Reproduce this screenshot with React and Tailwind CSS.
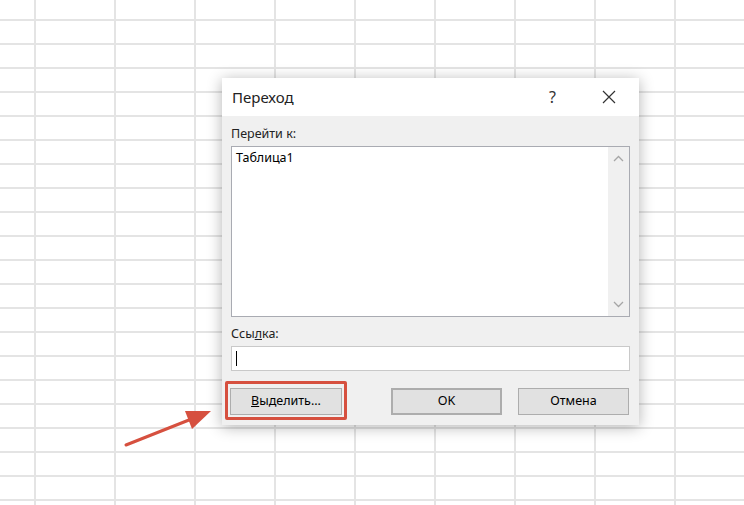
import React from 'react';

const font = { fontFamily: '"Noto Sans", "Open Sans", sans-serif' };

function Chevron({ down }) {
  return (
    <svg width="11" height="7" viewBox="0 0 11 7" className="text-[#a6a6a6]">
      <polyline
        points={down ? '1,1 5.5,5.5 10,1' : '1,6 5.5,1.5 10,6'}
        fill="none"
        stroke="currentColor"
        strokeWidth="1.3"
      />
    </svg>
  );
}

function Btn({ children, className = '' }) {
  return (
    <button
      className={`h-[27px] w-[111px] bg-[#e1e1e1] border border-[#adadad] text-[12.5px] text-black flex items-center justify-center ${className}`}
    >
      {children}
    </button>
  );
}

export default function App() {
  return (
    <div
      className="relative w-[744px] h-[505px] overflow-hidden bg-white bg-[linear-gradient(to_right,#e4e4e4_2px,transparent_2px),linear-gradient(to_bottom,#e4e4e4_2px,transparent_2px)] bg-[size:80px_24px] bg-[position:34px_19px]"
      style={font}
    >
      {/* dialog */}
      <div className="absolute left-[222px] top-[78px] w-[417px] h-[347px] flex flex-col bg-[#f0f0f0] shadow-[0_2px_14px_rgba(0,0,0,0.3)]">
        <div className="h-[38px] bg-white flex items-center pl-[10px] pr-[23px]">
          <span className="text-[15px] text-[#222]">Переход</span>
          <span className="ml-auto text-[16px] text-[#333] mr-[46px]">?</span>
          <svg width="14" height="14" viewBox="0 0 14 14">
            <path d="M1 1L13 13M13 1L1 13" stroke="#333" strokeWidth="1.2" />
          </svg>
        </div>

        <div className="flex-1 flex flex-col px-[9px] pt-[9px]">
          <div className="text-[12.5px] leading-[17px] text-[#222]">Перейти к:</div>
          <div className="mt-[4px] h-[171px] border border-[#a9abb2] bg-white flex">
            <div className="flex-1 pl-[4px] pt-[2px] text-[12.5px] leading-[17px] text-black">Таблица1</div>
            <div className="w-[21px] bg-[#f0f0f0] flex flex-col items-center justify-between py-[8px]">
              <Chevron />
              <Chevron down />
            </div>
          </div>

          <div className="mt-[8px] text-[12.5px] leading-[17px] text-[#222]">
            Ссы<span className="underline">л</span>ка:
          </div>
          <div className="mt-[4px] h-[25px] border border-[#c9c9c9] bg-white flex items-center pl-[4px]">
            <div className="w-[1px] h-[15px] bg-black" />
          </div>

          <div className="mt-[17px] flex items-center">
            <div className="relative">
              <Btn className="w-[112px] -ml-[1px]">
                <span>
                  <span className="underline">В</span>ыделить...
                </span>
              </Btn>
              <div className="absolute -left-[6px] -top-[7px] w-[122px] h-[39px] border-[3px] border-[#d6503f] rounded-[2px]" />
            </div>
            <Btn className="ml-auto border-[#0078d7] border-2">OK</Btn>
            <Btn className="ml-[16px] mr-[1px]">Отмена</Btn>
          </div>
        </div>
      </div>

      {/* annotation arrow */}
      <svg className="absolute left-0 top-0 pointer-events-none" width="744" height="505">
        <line x1="126" y1="445" x2="194" y2="418" stroke="#d6503f" strokeWidth="3" strokeLinecap="round" />
        <polygon points="211,411 185,411 192,429" fill="#d6503f" />
      </svg>
    </div>
  );
}
